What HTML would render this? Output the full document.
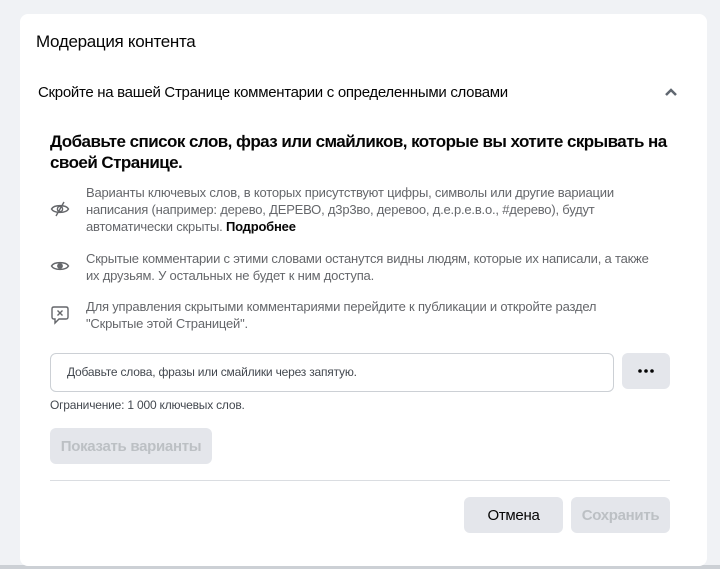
<!DOCTYPE html>
<html><head><meta charset="utf-8"><style>
body{margin:0;width:720px;height:569px;background:#f0f2f5;font-family:"Liberation Sans",sans-serif;position:relative;overflow:hidden;color:#050505}
.card{position:absolute;left:20px;top:14px;width:687px;height:552px;background:#fff;border-radius:8px}
.a{position:absolute;white-space:nowrap}
.g{color:#65676b;font-size:13px;line-height:17px;letter-spacing:-0.2px}
.btn{position:absolute;border-radius:6px;background:#e4e6eb;font-size:15px;font-weight:bold;display:flex;align-items:center;justify-content:center;letter-spacing:-0.3px}
.dis{color:#bcc0c4}
svg{position:absolute}
</style></head><body>
<div style="position:absolute;left:0;top:565px;width:720px;height:4px;background:#ccd0d5"></div>
<div class="card"></div>
<div class="a" style="left:36px;top:32px;font-size:17px;letter-spacing:-0.3px">Модерация контента</div>
<div class="a" style="left:38px;top:84px;font-size:15px;letter-spacing:-0.3px">Скройте на вашей Странице комментарии с определенными словами</div>
<svg style="left:664px;top:87px" width="14" height="10" viewBox="0 0 14 10"><path d="M2 8L7 3L12 8" stroke="#606770" stroke-width="2.5" fill="none"/></svg>
<div class="a" style="left:50px;top:131px;font-size:17px;font-weight:bold;line-height:21px;white-space:normal;width:640px;letter-spacing:-0.55px">Добавьте список слов, фраз или смайликов, которые вы хотите скрывать на своей Странице.</div>
<svg style="left:50px;top:199px" width="20" height="20" viewBox="0 0 20 20" fill="none" stroke="#65676b" stroke-width="1.4"><path d="M1.5 10C4 5.5 16 5.5 18.5 10C16 14.5 4 14.5 1.5 10Z"/><circle cx="10" cy="10" r="2.6"/><path d="M14 3L6 17"/></svg>
<div class="a g" style="left:86px;top:184px">Варианты ключевых слов, в которых присутствуют цифры, символы или другие вариации<br>написания (например: дерево, ДЕРЕВО, д3р3во, деревоо, д.е.р.е.в.о., #дерево), будут<br>автоматически скрыты. <b style="color:#050505">Подробнее</b></div>
<svg style="left:50px;top:256px" width="20" height="20" viewBox="0 0 20 20" fill="none" stroke="#65676b" stroke-width="1.4"><path d="M1.5 10C4 5.5 16 5.5 18.5 10C16 14.5 4 14.5 1.5 10Z"/><circle cx="10" cy="10" r="2.2" fill="#65676b"/></svg>
<div class="a g" style="left:86px;top:250px">Скрытые комментарии с этими словами останутся видны людям, которые их написали, а также<br>их друзьям. У остальных не будет к ним доступа.</div>
<svg style="left:50px;top:304px" width="20" height="22" viewBox="0 0 20 22" fill="none" stroke="#65676b" stroke-width="1.4"><path d="M4 3H16Q18 3 18 5V13Q18 15 16 15H9L5 19V15H4Q2 15 2 13V5Q2 3 4 3Z"/><path d="M7.5 6.5L12.5 11.5M12.5 6.5L7.5 11.5"/></svg>
<div class="a g" style="left:86px;top:298px">Для управления скрытыми комментариями перейдите к публикации и откройте раздел<br>"Скрытые этой Страницей".</div>
<div style="position:absolute;left:50px;top:353px;width:562px;height:37px;border:1px solid #ccd0d5;border-radius:6px"></div>
<div class="a" style="left:67px;top:365px;font-size:12px;color:#444950;letter-spacing:-0.2px">Добавьте слова, фразы или смайлики через запятую.</div>
<div class="btn" style="left:622px;top:353px;width:48px;height:36px">
<svg style="left:16px;top:16px" width="16" height="4" viewBox="0 0 16 4"><circle cx="2" cy="2" r="1.8" fill="#050505"/><circle cx="8" cy="2" r="1.8" fill="#050505"/><circle cx="14" cy="2" r="1.8" fill="#050505"/></svg></div>
<div class="a" style="left:50px;top:398px;font-size:12px;color:#444950;letter-spacing:-0.2px">Ограничение: 1 000 ключевых слов.</div>
<div class="btn dis" style="left:50px;top:428px;width:162px;height:36px">Показать варианты</div>
<div style="position:absolute;left:50px;top:480px;width:620px;height:1px;background:#dadde1"></div>
<div class="btn" style="left:464px;top:497px;width:99px;height:36px;font-weight:normal">Отмена</div>
<div class="btn dis" style="left:571px;top:497px;width:99px;height:36px">Сохранить</div>
</body></html>
